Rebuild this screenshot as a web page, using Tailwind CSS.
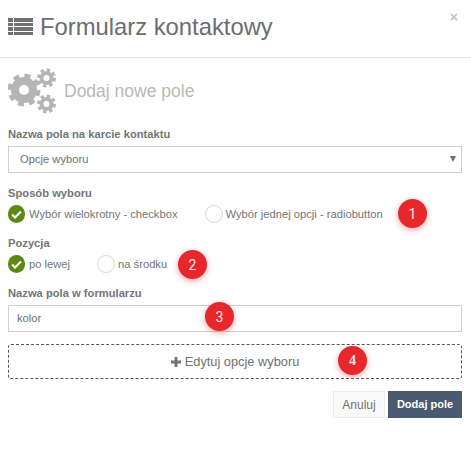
<!DOCTYPE html>
<html lang="pl">
<head>
    <meta charset="UTF-8">
    <meta name="viewport" content="width=device-width, initial-scale=1.0">
    <title>Formularz kontaktowy</title>
    <script src="https://cdn.jsdelivr.net/npm/@tailwindcss/browser@4"></script>
</head>
<body class="bg-white font-['Liberation_Sans',Arial,sans-serif] text-[#676a6c]">
    <div class="relative w-[471px] h-[468px] overflow-hidden">
        <!-- header -->
        <div class="relative flex items-center h-[58px] pl-2 gap-[7px] border-b border-[#e5e5e5]">
            <svg width="25" height="20" viewBox="0 0 25 20" fill="#6f7173" class="mb-1">
                <rect x="0" y="1" width="5" height="4"/><rect x="6" y="1" width="19" height="4"/>
                <rect x="0" y="6" width="5" height="3"/><rect x="6" y="6" width="19" height="3"/>
                <rect x="0" y="10" width="5" height="4"/><rect x="6" y="10" width="19" height="4"/>
                <rect x="0" y="15" width="5" height="3"/><rect x="6" y="15" width="19" height="3"/>
            </svg>
            <h1 class="text-[23.8px] leading-none text-[#6b6d6f] mb-1">Formularz kontaktowy</h1>
            <span class="absolute right-[13px] top-[9px] text-sm leading-4 font-bold text-[#c4c4c4]">×</span>
        </div>

        <div class="pl-2 pr-[9px]">
            <!-- section title -->
            <div class="flex items-center gap-[8px] h-[64px] text-[#b9b9b9]">
                <svg width="48" height="48" viewBox="0 0 48 48" fill="none" stroke="#b5b5b5">
                    <circle cx="16" cy="24" r="9" stroke-width="8"/>
                    <circle cx="16" cy="24" r="14" stroke-width="5" stroke-dasharray="5.8 5.2"/>
                    <circle cx="38.5" cy="12" r="5" stroke-width="4"/>
                    <circle cx="38.5" cy="12" r="8" stroke-width="3" stroke-dasharray="3.4 2.88"/>
                    <circle cx="38.5" cy="38" r="5" stroke-width="4"/>
                    <circle cx="38.5" cy="38" r="8" stroke-width="3" stroke-dasharray="3.4 2.88"/>
                </svg>
                <span class="text-[17.5px] leading-none mt-[3px]">Dodaj nowe pole</span>
            </div>

            <!-- field type -->
            <label class="block mt-[5px] text-[11.2px] leading-[14px] font-bold text-[#737577]">Nazwa pola na karcie kontaktu</label>
            <div class="relative flex items-center mt-[5px] h-[27px] px-[11px] border border-[#d0d0d0] text-[11.2px] text-[#6f7173]">
                Opcje wyboru
                <span class="absolute right-[5px] top-[9px] w-0 h-0 border-x-[3px] border-x-transparent border-t-[6px] border-t-[#6b6d6f]"></span>
            </div>

            <!-- choice mode -->
            <div class="mt-[13px] text-[11.2px] leading-[14px] font-bold text-[#737577]">Sposób wyboru</div>
            <div class="flex items-center mt-[5px] h-[18px] text-[11.2px] text-[#737577]">
                <span class="flex items-center justify-center w-[17px] h-[18px] rounded-full bg-[#5b8a12]">
                    <svg width="11" height="9" viewBox="0 0 11 9" fill="none" stroke="#fff" stroke-width="2.2"><path d="M1 4.5l3 3 6-6"/></svg>
                </span>
                <span class="ml-1">Wybór wielokrotny - checkbox</span>
                <span class="ml-[27px] w-[18px] h-[18px] rounded-full border border-[#d8d8d8]"></span>
                <span class="ml-[3px]">Wybór jednej opcji - radiobutton</span>
            </div>

            <!-- position -->
            <div class="mt-[13px] text-[11.2px] leading-[14px] font-bold text-[#737577]">Pozycja</div>
            <div class="flex items-center mt-[5px] h-[18px] text-[11.2px] text-[#737577]">
                <span class="flex items-center justify-center w-[17px] h-[18px] rounded-full bg-[#5b8a12]">
                    <svg width="11" height="9" viewBox="0 0 11 9" fill="none" stroke="#fff" stroke-width="2.2"><path d="M1 4.5l3 3 6-6"/></svg>
                </span>
                <span class="ml-1">po lewej</span>
                <span class="ml-[27px] w-[18px] h-[18px] rounded-full border border-[#d8d8d8]"></span>
                <span class="ml-[3px]">na środku</span>
            </div>

            <!-- form field name -->
            <label class="block mt-[13px] text-[11.2px] leading-[14px] font-bold text-[#737577]">Nazwa pola w formularzu</label>
            <div class="flex items-center mt-[5px] h-[27px] px-2 border border-[#d0d0d0] text-[11.2px] text-[#6f7173]">kolor</div>

            <!-- edit options -->
            <div class="flex items-center justify-center gap-[4px] mt-[12px] h-[35px] border border-dashed border-[#55585a] rounded-[3px] text-[12.8px] text-[#6f7173]">
                <svg width="10" height="10" viewBox="0 0 10 10" fill="#6f7173"><path d="M3.6 0h2.8v3.6H10v2.8H6.4V10H3.6V6.4H0V3.6h3.6z"/></svg>
                <span>Edytuj opcje wyboru</span>
            </div>

            <!-- actions -->
            <div class="flex justify-end gap-[3px] mt-[12px]">
                <button class="w-[52px] h-[27px] bg-[#fafafa] border border-[#ececec] text-xs text-[#6f7173]">Anuluj</button>
                <button class="w-[74px] h-[27px] bg-[#4a5a70] text-[11px] font-bold text-white">Dodaj pole</button>
            </div>
        </div>

        <!-- numbered markers -->
        <span class="absolute left-[398px] top-[199px] flex items-center justify-center w-[29px] h-[29px] rounded-full bg-[#e8272c] shadow-[0_2px_6px_rgba(200,60,60,0.45)] font-['Roboto',sans-serif] text-sm text-[#ffe9e9]">1</span>
        <span class="absolute left-[178px] top-[250px] flex items-center justify-center w-[29px] h-[29px] rounded-full bg-[#e8272c] shadow-[0_2px_6px_rgba(200,60,60,0.45)] font-['Roboto',sans-serif] text-sm text-[#ffe9e9]">2</span>
        <span class="absolute left-[205px] top-[302px] flex items-center justify-center w-[29px] h-[29px] rounded-full bg-[#e8272c] shadow-[0_2px_6px_rgba(200,60,60,0.45)] font-['Roboto',sans-serif] text-sm text-[#ffe9e9]">3</span>
        <span class="absolute left-[338px] top-[346px] flex items-center justify-center w-[29px] h-[29px] rounded-full bg-[#e8272c] shadow-[0_2px_6px_rgba(200,60,60,0.45)] font-['Liberation_Serif',serif] font-bold text-sm text-[#ffe9e9]">4</span>
    </div>
</body>
</html>
